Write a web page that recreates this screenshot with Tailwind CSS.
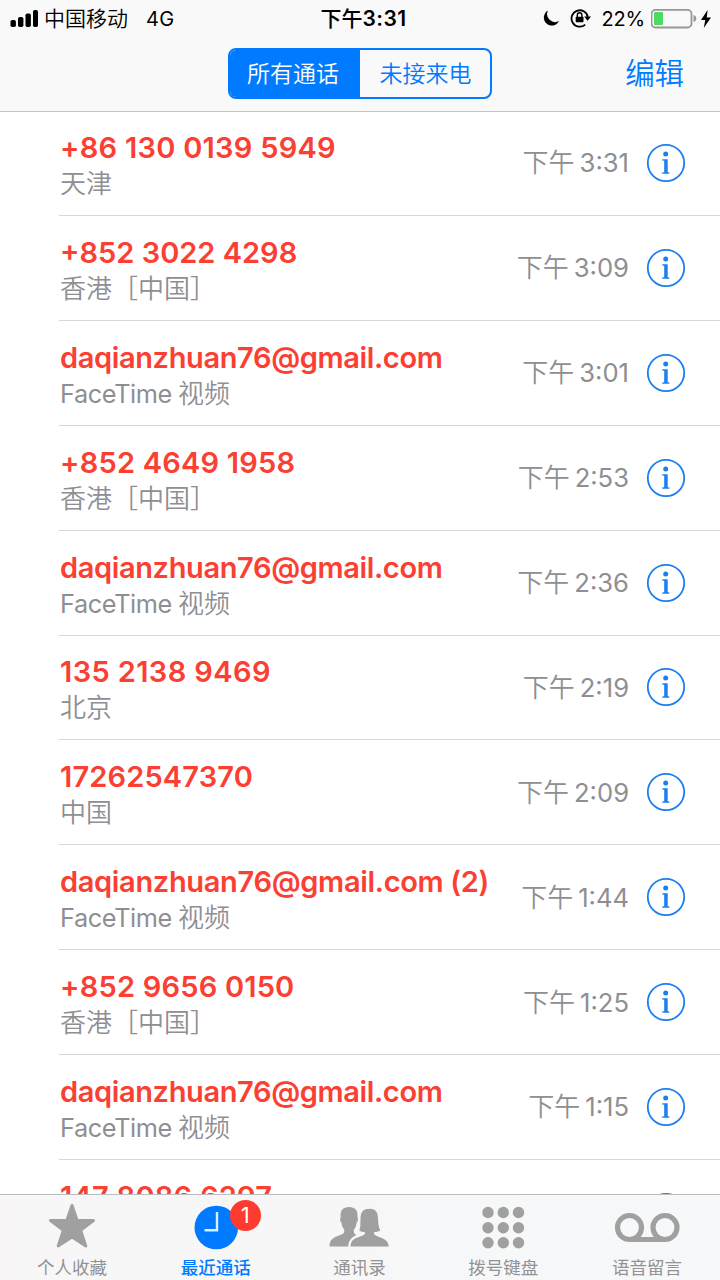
<!DOCTYPE html>
<html lang="zh-CN">
<head>
  <meta charset="UTF-8" />
  <meta name="viewport" content="width=device-width, initial-scale=1.0"/>
  <title>最近通话</title>
  <script src="https://cdn.jsdelivr.net/npm/@tailwindcss/browser@4"></script>
</head>
<body class="h-screen overflow-hidden bg-white font-['Inter','Noto_Sans_CJK_SC',sans-serif]">

  <div class="flex h-[1280px] w-[720px] flex-col overflow-hidden">

    <!-- Header -->
    <header class="h-[112px] shrink-0 border-b border-[#c4c4c6] bg-[#f9f9f9]">
      <!-- Status bar -->
      <div class="grid h-[38px] grid-cols-[1fr_auto_1fr] items-center pl-2.5 pr-2 text-[20px] leading-[38px] text-black">
        <div class="flex items-center">
          <svg class="mr-1.5 h-[18px] w-7" viewBox="0 0 28 18">
            <rect x="0.5" y="10" width="5.4" height="7" rx="1.8"/>
            <rect x="8" y="7" width="5.4" height="10" rx="1.8"/>
            <rect x="15.5" y="3.5" width="5.4" height="13.5" rx="1.8"/>
            <rect x="23" y="0" width="5" height="17" rx="1.8"/>
          </svg>
          <span class="text-[21px] font-[350]">中国移动</span>
          <span class="ml-[18px] text-[20px] tracking-[0.3px]">4G</span>
        </div>
        <div class="pl-[5px] text-[21px] font-semibold"><span class="font-medium">下午</span><span class="tracking-[0.4px]">3:31</span></div>
        <div class="flex items-center justify-end">
          <svg class="mr-2.5 h-[18px] w-[18px]" viewBox="0 0 18 18">
            <path d="M6 0.5A8 8 0 1 0 17 11.1A8 8 0 0 1 6 0.5Z"/>
          </svg>
          <svg class="mr-2.5 h-5 w-[22px]" viewBox="0 0 22 20">
            <path d="M15.2 15.6A8.2 8.2 0 1 1 17.8 8" fill="none" stroke="#000" stroke-width="1.8"/>
            <path d="M14.2 7.6H21L17.6 11.8Z"/>
            <path d="M7.3 8V6a2.3 2.3 0 0 1 4.600 0v2" fill="none" stroke="#000" stroke-width="1.4"/>
            <rect x="5.7" y="7.7" width="7.8" height="5.6" rx="0.8"/>
          </svg>
          <span class="text-[20px] tracking-[-0.2px]">22%</span>
          <svg class="ml-1.5 h-5 w-[46px]" viewBox="0 0 46 20">
            <rect x="0.5" y="0.9" width="40" height="17.6" rx="4" fill="none" stroke="#97979b" stroke-width="1.8"/>
            <rect x="3" y="3" width="9" height="13" rx="1" fill="#4cd964"/>
            <path d="M42.5 6a3.6 3.6 0 0 1 0 7Z" fill="#97979b"/>
          </svg>
          <svg class="ml-[3px] h-[18px] w-3" viewBox="0 0 12 18">
            <path d="M7.6 0L1 10h4.2L3.8 18L11 7.5H6.8Z"/>
          </svg>
        </div>
      </div>

      <!-- Navigation bar -->
      <div class="grid grid-cols-[1fr_auto_1fr] items-center pt-[9px]">
        <div></div>
        <div class="flex h-[51px] w-[264px] overflow-hidden rounded-[8px] border-2 border-[#007aff] text-center text-[23px] font-[350] leading-[48px]">
          <div class="w-1/2 bg-[#007aff] pr-1 text-white">所有通话</div>
          <div class="w-1/2 pl-px text-[#007aff]">未接来电</div>
        </div>
        <div class="pr-9 text-right text-[29.4px] font-[350] leading-[53px] text-[#007aff]">编辑</div>
      </div>
    </header>

    <!-- Calls -->
    <main class="min-h-0 flex-1 overflow-hidden bg-white">
      <div id="calls" class="-mt-px"></div>
    </main>

    <!-- Tab bar -->
    <nav class="grid h-[86px] shrink-0 grid-cols-5 border-t border-[#bdbdbf] bg-linear-to-r from-[#f8f6f6] to-[#f6f8fa] pr-px text-[17.5px] text-[#929292]">
      <div class="flex flex-col items-center">
        <svg class="mt-2 h-[48px] w-12" viewBox="0 0 48 48" fill="#a0a0a0" stroke="#a0a0a0" stroke-width="3" stroke-linejoin="round">
          <path d="M24 2.500L29.200 17.500H45.500L32.600 27.200L37.800 43L24 34L10.200 43L15.400 27.200L2.500 17.500H18.800Z"/>
        </svg>
        <span class="mt-1 leading-[26px]">个人收藏</span>
      </div>
      <div class="flex flex-col items-center text-[#007aff]">
        <div class="relative mt-2 h-[48px] w-12">
          <svg class="h-[48px] w-12" viewBox="0 0 48 48">
            <circle cx="24.3" cy="24.5" r="21.8" fill="#007aff"/>
            <path d="M25 9V27.3H12.500" fill="none" stroke="#d9f1ff" stroke-width="2.400"/>
          </svg>
          <span class="absolute -top-[3px] left-[38px] h-[31px] w-[31px] rounded-full bg-[#ff3b30] text-center text-[22px] leading-[31px] text-white">1</span>
        </div>
        <span class="mt-1 font-medium leading-[26px]">最近通话</span>
      </div>
      <div class="flex flex-col items-center">
        <svg class="mt-2 h-[48px] w-[60px]" viewBox="0 0 60 48" fill="#a0a0a0">
          <path d="M0.500 43.500C0.500 36 5 34 12.500 31.500C15 30.600 15.500 29.500 15.200 26.500C13.300 24.500 12.900 22 12.400 19.500C10.800 18.500 10.900 15.500 11.700 14.300C10.900 7.500 14 4 20 4C26 4 29.200 7.500 28.500 14.300C29.300 15.500 29.300 18.500 27.700 19.500C27.200 22 26.800 24.500 25 26.500C24.700 29.500 25 30.500 27.500 32C22 34.500 19.500 38 19.200 43.500Z"/>
          <path d="M21.500 43.500C22 37.500 24 36 31 33.500C35.500 32 36.300 31.500 36 29.300C34 29 31.800 28.500 30.300 27.500C32 24 31 18 31.800 12.500C32.600 7.800 35.500 5.500 40 6C46 5 48.500 9 48.900 14C49.300 19 49.200 24 51.300 27.500C49.500 28.700 47 29 45 29.300C44.800 31.500 45.500 32 49 33.500C56 36 59 37.500 59.800 43.500Z"/>
        </svg>
        <span class="mt-1 leading-[26px]">通讯录</span>
      </div>
      <div class="flex flex-col items-center">
        <svg class="mt-2 h-[48px] w-[44px]" viewBox="0 0 44 48" fill="#a0a0a0">
          <circle cx="7" cy="9.500" r="5.700"/><circle cx="22.300" cy="9.500" r="5.700"/><circle cx="37.500" cy="9.500" r="5.700"/>
          <circle cx="7" cy="24.700" r="5.700"/><circle cx="22.300" cy="24.700" r="5.700"/><circle cx="37.500" cy="24.700" r="5.700"/>
          <circle cx="7" cy="39.800" r="5.700"/><circle cx="22.300" cy="39.800" r="5.700"/><circle cx="37.500" cy="39.800" r="5.700"/>
        </svg>
        <span class="mt-1 leading-[26px]">拨号键盘</span>
      </div>
      <div class="flex flex-col items-center">
        <svg class="mt-2 h-[48px] w-[66px]" viewBox="0 0 66 48" fill="none" stroke="#a0a0a0" stroke-width="5.200">
          <circle cx="15.500" cy="24.500" r="12"/>
          <circle cx="51" cy="24.500" r="12"/>
          <path d="M15.500 36.500H51"/>
        </svg>
        <span class="mt-1 leading-[26px]">语音留言</span>
      </div>
    </nav>

  </div>

  <script>
    // gap = letter spacing of the name, in px
    const calls = [
      { name: "+86 130 0139 5949", gap: 0.26, place: "天津", time: "3:31" },
      { name: "+852 3022 4298", gap: 0, place: "香港［中国］", time: "3:09" },
      { name: "daqianzhuan76@gmail.com", gap: -0.37, app: "FaceTime", place: "视频", time: "3:01" },
      { name: "+852 4649 1958", gap: 0.2, place: "香港［中国］", time: "2:53" },
      { name: "daqianzhuan76@gmail.com", gap: -0.37, app: "FaceTime", place: "视频", time: "2:36" },
      { name: "135 2138 9469", gap: 0.38, place: "北京", time: "2:19" },
      { name: "17262547370", gap: 0.15, place: "中国", time: "2:09" },
      { name: "daqianzhuan76@gmail.com (2)", gap: -0.33, app: "FaceTime", place: "视频", time: "1:44" },
      { name: "+852 9656 0150", gap: 0.2, place: "香港［中国］", time: "1:25" },
      { name: "daqianzhuan76@gmail.com", gap: -0.37, app: "FaceTime", place: "视频", time: "1:15" },
      { name: "147 8086 6297", gap: 0.25, place: "中国", time: "1:02" }
    ];

    document.getElementById("calls").innerHTML = calls.map(c => `
      <div class="ml-[59px] flex h-[104.92px] items-center border-b border-[#d6d6d8] pr-[34px]">
        <div class="min-w-0 flex-1 whitespace-nowrap pl-px pt-1">
          <p class="-mb-px pt-px text-[29px] font-semibold leading-[38px] text-[#fb4033]" style="letter-spacing: ${c.gap}px">${c.name}</p>
          <p class="text-[26px] font-[350] leading-[36px] text-[#8e8e93]">${c.app ? `<span class="mr-1.5 text-[25.3px] font-normal tracking-[-0.4px]">${c.app}</span>` : ''}${c.place}</p>
        </div>
        <p class="whitespace-nowrap text-[26px] font-[350] text-[#8e8e93]">下午<span class="ml-[5px] text-[25.6px] font-normal">${c.time}</span></p>
        <svg class="ml-[17px] h-10 w-10 shrink-0" viewBox="0 0 40 40">
          <circle cx="20" cy="20" r="18.200" fill="none" stroke="#1a7ff0" stroke-width="1.800"/>
          <circle cx="19.700" cy="11" r="2.500" fill="#1a7ff0"/>
          <path d="M16.300 16.300H21.700V29.200L23.400 29.500V30.700H16.200V29.500L18.200 29.200V17.700L16.300 17.400Z" fill="#1a7ff0"/>
        </svg>
      </div>`).join("");
  </script>
</body>
</html>
